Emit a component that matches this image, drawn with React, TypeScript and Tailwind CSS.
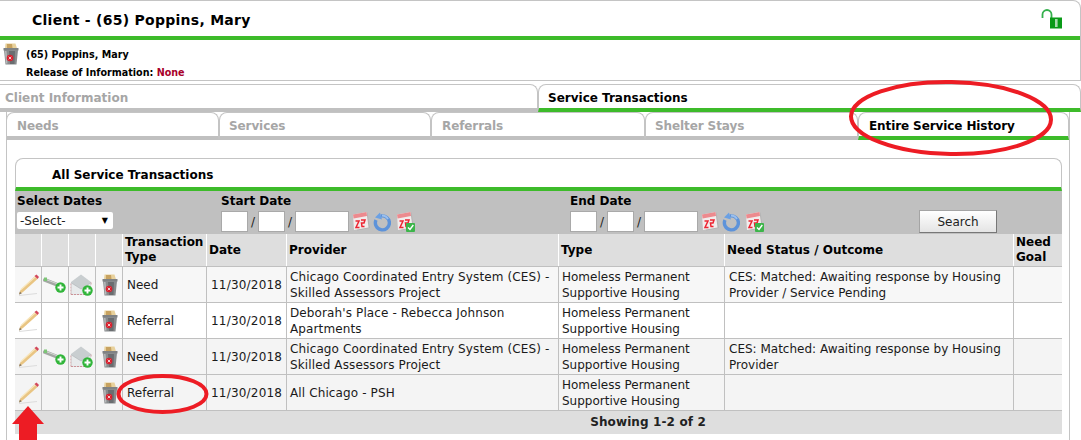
const ROWS = [
  { kind: "Need", provider: ["Chicago Coordinated Entry System (CES) -", "Skilled Assessors Project"], status: ["CES: Matched: Awaiting response by Housing", "Provider / Service Pending"], actions: true, shade: "bg-[#f7f7f7]" },
  { kind: "Referral", provider: ["Deborah's Place - Rebecca Johnson", "Apartments"], status: [], actions: false, shade: "bg-white" },
  { kind: "Need", provider: ["Chicago Coordinated Entry System (CES) -", "Skilled Assessors Project"], status: ["CES: Matched: Awaiting response by Housing", "Provider"], actions: true, shade: "bg-[#f4f4f4]" },
  { kind: "Referral", provider: ["All Chicago - PSH"], status: [], actions: false, shade: "bg-[#f4f4f4]" },
];

const COLS = "grid grid-cols-[27px_27px_27px_27px_84px_80px_272px_166px_289px_47px]";

function Pencil() {
  return (
    <svg width="24" height="24" viewBox="0 0 24 24" className="block">
      <path d="M3 22.5 L21 20.5" stroke="#dcdcdc" strokeWidth="1.2" />
      <path d="M18.500 3.500 L21.500 6 L7 19 L3 21.500 L4.500 17 Z" fill="#e9c583" />
      <path d="M5 16.500 L19 4" stroke="#f8e7bf" strokeWidth="1.2" />
      <path d="M3 21.500 L3.900 18.600 L5.800 20.400 Z" fill="#8b7a62" />
      <path d="M18.500 3 L20.500 1.500 L23 4 L21.500 6 Z" fill="#d2475b" />
    </svg>
  );
}

function GreenPlus({ x, y }: { x: number; y: number }) {
  return (
    <g>
      <circle cx={x} cy={y} r="5.2" fill="#31b53a" />
      <path d={`M${x - 3} ${y} H${x + 3} M${x} ${y - 3} V${y + 3}`} stroke="#fff" strokeWidth="1.9" />
    </g>
  );
}

function KeyPlus() {
  return (
    <svg width="24" height="24" viewBox="0 0 24 24" className="block">
      <path d="M2 7 L16 12.500" stroke="#a3a8a3" strokeWidth="4" strokeLinecap="round" />
      <path d="M3 6.500 L15 11" stroke="#d5d8d5" strokeWidth="1" />
      <rect x="1" y="4.500" width="3" height="3.500" fill="#7cc576" />
      <GreenPlus x={17.500} y={14.500} />
    </svg>
  );
}

function MailPlus() {
  return (
    <svg width="24" height="24" viewBox="0 0 24 24" className="block">
      <path d="M1 9 L11 1.500 L21 9 V21.500 H1 Z" fill="#c9ced0" />
      <path d="M1 21.500 V9.500 M1 21.500 H15 M21 9.500 V12" stroke="#c98a90" strokeWidth="0.9" strokeDasharray="2 1" />
      <path d="M1.500 10 L11 16 L20.500 10 V21 H1.500 Z" fill="#e8ebec" />
      <path d="M1.500 10 L11 16 L20.500 10" fill="none" stroke="#adb2b5" strokeWidth="0.6" />
      <GreenPlus x={17.500} y={17.500} />
    </svg>
  );
}

function Trash() {
  return (
    <svg width="16" height="22" viewBox="0 0 16 22" className="block">
      <path d="M2.500 0.500 H12.500 L14 5.500 H2 Z" fill="#e8d19c" />
      <path d="M4 1 H9 L9.500 5 H4 Z" fill="#c7a260" />
      <path d="M0.500 5 H15.500 V7.500 H0.500 Z" fill="#7f8284" />
      <path d="M1 7 H15 L13.500 21.500 H2.500 Z" fill="#888b8d" />
      <path d="M6 8 H12 L11.500 21 H7 Z" fill="#6a6d70" />
      <path d="M2 8 L3 20.500 H4.500 L3.500 8 Z" fill="#b8babb" />
      <circle cx="7" cy="15" r="3.300" fill="#d9202e" />
      <path d="M5.700 13.700 L8.300 16.300 M8.300 13.700 L5.700 16.300" stroke="#f7dede" strokeWidth="0.9" />
    </svg>
  );
}

function Calendar({ check = false }: { check?: boolean }) {
  return (
    <svg width="20" height="21" viewBox="0 0 20 21" className="block">
      <path d="M4 4 L16.500 1.500 L19 17 L6 19.500 Z" fill="#b4b4b4" />
      <path d="M2 3.500 L15.500 1 L17.500 16.500 L3 19 Z" fill="#f2ecec" />
      <path d="M2 3.500 L15.500 1 L16 5 L2.600 7.500 Z" fill="#ec8a8e" />
      <path d="M4.500 10 H8 L5 16.500 H8.500 M10 9 H14 L13 12 H10.500 L11 15.500 H13.500" fill="none" stroke="#ed2532" strokeWidth="1.500" />
      {check && (
        <g>
          <rect x="11" y="12" width="9" height="9" rx="1" fill="#3cb54a" />
          <path d="M13 16.500 L15 18.500 L18.300 14" fill="none" stroke="#fff" strokeWidth="1.400" />
        </g>
      )}
    </svg>
  );
}

function Refresh() {
  return (
    <svg width="18" height="20" viewBox="0 0 18 20" className="block">
      <path d="M8 4 A7 7 0 1 1 3 8" fill="none" stroke="#5d93da" strokeWidth="3.400" />
      <path d="M7 0.500 L2 5.500 L9 7.500 Z" fill="#6aa0e4" />
      <path d="M9 3.500 A7 7 0 0 1 15 7" fill="none" stroke="#9cc0ee" strokeWidth="1.800" />
    </svg>
  );
}

function Lock() {
  return (
    <svg width="21" height="20" viewBox="0 0 21 20" className="block">
      <path d="M1.500 9 V5.500 A4.500 4.500 0 0 1 10.500 5.500 V9" fill="none" stroke="#35b04d" strokeWidth="1.800" />
      <rect x="9" y="8.500" width="12" height="11" fill="#099a17" />
      <rect x="14" y="10" width="2.600" height="8" fill="#a9dbae" />
    </svg>
  );
}

function DateField({ label, width }: { label: string; width: string }) {
  return (
    <div className={width}>
      <div className="h-[17px] text-[12px] leading-[19px] font-bold text-black">{label}</div>
      <div className="mt-[2px] flex items-center">
        <div className="h-[21px] w-[27px] border border-[#a9a9a9] bg-white" />
        <span className="w-[10px] text-center text-[12px] text-[#222]">/</span>
        <div className="h-[21px] w-[27px] border border-[#a9a9a9] bg-white" />
        <span className="w-[10px] text-center text-[12px] text-[#222]">/</span>
        <div className="h-[21px] w-[54px] border border-[#a9a9a9] bg-white" />
        <div className="ml-[2px] flex items-center gap-[2px]">
          <Calendar />
          <Refresh />
          <div className="ml-[2px]">
            <Calendar check />
          </div>
        </div>
      </div>
    </div>
  );
}

function SubTab({ label, width, inset = "pl-[10px]", active = false }: { label: string; width: string; inset?: string; active?: boolean }) {
  return (
    <div
      className={`${width} ${inset} h-[28px] rounded-t-[8px] border-x border-t border-[#c4c4c4] border-b-4 text-[12px] leading-[26px] font-bold tracking-[-0.1px] ${
        active ? "border-b-[#3dbb2a] text-black" : "border-b-[#c0c0c0] text-[#a6a6a6]"
      }`}
    >
      {label}
    </div>
  );
}

function HeadCell({ children }: { children?: React.ReactNode }) {
  return <div className="flex items-center border-r border-white px-[2px] text-[12px] leading-[15px] font-bold text-black last:border-r-0">{children}</div>;
}

function Cell({ children, className = "" }: { children?: React.ReactNode; className?: string }) {
  return <div className={`flex items-center border-r border-[#c0c0c0] last:border-r-0 ${className}`}>{children}</div>;
}

function Lines({ lines, className = "pl-[3px] tracking-[0.12px]" }: { lines: string[]; className?: string }) {
  return (
    <div className={`${className} whitespace-nowrap text-[12px] leading-[16px] text-[#1a1a1a]`}>
      {lines.map((line) => (
        <div key={line}>{line}</div>
      ))}
    </div>
  );
}

export default function App() {
  return (
    <div className="relative h-[440px] w-[1081px] overflow-hidden bg-white font-['DejaVu_Sans',Verdana,sans-serif]">
      {/* client header */}
      <div className="h-[81px] rounded-tr-[8px] border-t border-r border-b border-[#c4c4c4]">
        <div className="flex h-[39px] items-center justify-between border-b-4 border-[#3dbb2a] pr-[18px] pl-[32px]">
          <h1 className="pt-[3px] text-[14px] font-bold tracking-[0.27px] text-black">Client - (65) Poppins, Mary</h1>
          <Lock />
        </div>
        <div className="flex gap-[7px] pt-[3px] pl-[3px]">
          <Trash />
          <div className="pt-[3px] text-[9.6px] leading-[18px] font-bold text-black">
            <div>(65) Poppins, Mary</div>
            <div>
              Release of Information: <span className="text-[#a8002a]">None</span>
            </div>
          </div>
        </div>
      </div>

      {/* main tabs */}
      <div className="mt-[3px] flex">
        <div className="h-[28px] w-[538px] rounded-tr-[8px] border-t border-r border-[#c4c4c4] border-b-4 border-b-[#c0c0c0] pl-[5px] text-[12px] leading-[26px] font-bold text-[#a6a6a6]">
          Client Information
        </div>
        <div className="h-[28px] flex-1 rounded-t-[8px] border-x border-t border-[#c4c4c4] border-b-4 border-b-[#3dbb2a] pl-[9px] text-[12px] leading-[26px] font-bold text-black">
          Service Transactions
        </div>
      </div>

      {/* service tab panel */}
      <div className="ml-[6px] h-[328px] w-[1064px] border-x border-[#c4c4c4]">
        <div className="-ml-px flex">
          <SubTab label="Needs" width="w-[213px]" />
          <SubTab label="Services" width="w-[212px]" inset="pl-[9px]" />
          <SubTab label="Referrals" width="w-[214px]" />
          <SubTab label="Shelter Stays" width="w-[213px]" inset="pl-[9px]" />
          <SubTab label="Entire Service History" width="flex-1" active />
        </div>

        <div className="mt-[18px] ml-[8px] w-[1047px]">
          <div className="h-[33px] rounded-t-[8px] border-x border-t border-[#c4c4c4] border-b-4 border-b-[#3dbb2a] pl-[36px] text-[12px] leading-[32px] font-bold text-black">
            All Service Transactions
          </div>

          {/* filter bar */}
          <div className="flex h-[43px] bg-[#c0c0c0] pt-[1px] pl-[2px]">
            <div className="w-[204px]">
              <div className="h-[17px] text-[12px] leading-[19px] font-bold text-black">Select Dates</div>
              <div className="mt-[3px] flex h-[17px] w-[96px] items-center justify-between rounded-[2px] bg-white pr-[5px] pl-[3px] text-[12px] text-[#222]">
                <span>-Select-</span>
                <span className="text-[8px] text-black">▼</span>
              </div>
            </div>
            <DateField label="Start Date" width="w-[349px]" />
            <DateField label="End Date" width="w-[349px]" />
            <button className="mt-[18px] h-[23px] w-[78px] border border-[#a4a4a4] border-r-[#777] border-b-[#777] bg-gradient-to-b from-white to-[#e4e4e4] text-[12px] text-[#222]">
              Search
            </button>
          </div>

          {/* table */}
          <div className={`${COLS} h-[32px] bg-[#dedede]`}>
            <HeadCell />
            <HeadCell />
            <HeadCell />
            <HeadCell />
            <HeadCell>
              <span>
                Transaction
                <br />
                Type
              </span>
            </HeadCell>
            <HeadCell>Date</HeadCell>
            <HeadCell>Provider</HeadCell>
            <HeadCell>Type</HeadCell>
            <HeadCell>Need Status / Outcome</HeadCell>
            <HeadCell>
              <span>
                Need
                <br />
                Goal
              </span>
            </HeadCell>
          </div>
          <div className="border-x border-[#c0c0c0]">
            {ROWS.map((row, i) => (
              <div key={i} className={`${COLS} h-[36px] -mx-px border-t border-[#c0c0c0] ${row.shade}`}>
                <Cell className="justify-center">
                  <Pencil />
                </Cell>
                <Cell className="justify-center">{row.actions && <KeyPlus />}</Cell>
                <Cell className="justify-center">{row.actions && <MailPlus />}</Cell>
                <Cell className="justify-center pl-[1px]">
                  <Trash />
                </Cell>
                <Cell>
                  <Lines lines={[row.kind]} className="pl-[4px]" />
                </Cell>
                <Cell>
                  <Lines lines={["11/30/2018"]} className="pl-[4px] tracking-[0.2px]" />
                </Cell>
                <Cell>
                  <Lines lines={row.provider} />
                </Cell>
                <Cell>
                  <Lines lines={["Homeless Permanent", "Supportive Housing"]} className="pl-[3px]" />
                </Cell>
                <Cell>
                  <Lines lines={row.status} className="pl-[4px]" />
                </Cell>
                <Cell />
              </div>
            ))}
          </div>
          <div className="h-[24px] border-t border-[#c0c0c0] bg-[#dedede] pl-[219px] text-center text-[12px] leading-[23px] font-bold tracking-[0.12px] text-[#222]">
            Showing 1-2 of 2
          </div>
        </div>
      </div>

      {/* hand drawn annotations */}
      <svg width="1081" height="440" viewBox="0 0 1081 440" className="pointer-events-none absolute top-0 left-0">
        <ellipse cx="951" cy="118" rx="100" ry="36" fill="none" stroke="#ed1c24" strokeWidth="4" transform="rotate(1 951 118)" />
        <ellipse cx="162.500" cy="394" rx="44" ry="18" fill="none" stroke="#ed1c24" strokeWidth="4" />
        <path d="M28 406 L44 424 H37 V440 H19 V424 H12 Z" fill="#ed1c24" />
      </svg>
    </div>
  );
}
